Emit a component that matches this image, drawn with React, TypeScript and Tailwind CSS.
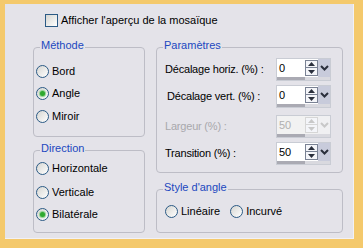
import React from 'react'

const Radio = ({ checked }: { checked?: boolean }) => (
  <span className="w-[13px] h-[13px] shrink-0 rounded-full border border-[#2b5a85] bg-linear-to-br from-[#d6d6d2] to-white flex items-center justify-center">
    {checked && <span className="w-[5px] h-[5px] rounded-full bg-[#2fa92f] shadow-[0_0_1px_1px_#8ad08a]" />}
  </span>
)

const RadioItem = ({ label, checked, className = '' }: { label: string; checked?: boolean; className?: string }) => (
  <div className={`flex items-center h-[13px] gap-[3px] ${className}`}>
    <Radio checked={checked} />
    <span className="leading-[13px]">{label}</span>
  </div>
)

const Group = ({ title, className, children }: { title: string; className: string; children: React.ReactNode }) => (
  <div className={`relative rounded-[4px] border border-[#bdbdc6] ${className}`}>
    <span className="absolute -top-[9px] left-[6px] px-[1px] bg-[#e4e3e9] leading-[13px] text-[#2148c0]">{title}</span>
    {children}
  </div>
)

const SpinField = ({ value, disabled }: { value: string; disabled?: boolean }) => {
  const arrow = disabled ? '#c8c8c8' : '#2a2f3c'
  const btnBorder = disabled ? 'border-[#d6d6d6]' : 'border-[#7a8294]'
  return (
    <div className="w-[55px] h-[23px] flex flex-col border border-[#c9ccd4]">
      <div className={`flex h-[18px] ${disabled ? 'bg-[#f2f2f2]' : 'bg-white'}`}>
        <span className={`flex-1 pl-[2px] leading-[18px] ${disabled ? 'text-[#b0b0b0]' : 'text-black'}`}>{value}</span>
        <div className="w-[13px] flex flex-col pt-[1px]">
          <div className={`h-[8px] border ${btnBorder} bg-[#f4f5f9] flex items-center justify-center`}>
            <svg width="7" height="4" viewBox="0 0 7 4"><path d="M0 4 L3.5 0 L7 4 Z" fill={arrow} /></svg>
          </div>
          <div className={`h-[8px] border border-t-0 ${btnBorder} bg-[#f4f5f9] flex items-center justify-center`}>
            <svg width="7" height="4" viewBox="0 0 7 4"><path d="M0 0 L3.5 4 L7 0 Z" fill={arrow} /></svg>
          </div>
        </div>
        <div className={`w-[12px] flex items-center justify-center ${disabled ? 'bg-[#f0f0f2]' : 'bg-[#c8cbdb]'}`}>
          <svg width="9" height="6" viewBox="0 0 9 6">
            <path d="M1 1 L4.5 4.5 L8 1" stroke={arrow} strokeWidth="2" fill="none" />
          </svg>
        </div>
      </div>
      <div className="flex h-[4px]">
        <div className="w-[28px] bg-[#aaaab3]" />
        <div className="flex-1 bg-[#d9d9df]" />
      </div>
    </div>
  )
}

const ParamRow = ({ label, value, disabled, className = '', labelClass = '' }: { label: string; value: string; disabled?: boolean; className?: string; labelClass?: string }) => (
  <div className={`flex items-center justify-between h-[23px] ${className}`}>
    <span className={`tracking-[-0.2px] ${disabled ? 'text-[#a8a8ac]' : 'text-black'} ${labelClass}`}>{label}</span>
    <SpinField value={value} disabled={disabled} />
  </div>
)

export default function App() {
  return (
    <div className="w-[363px] h-[248px] bg-[#f4c96c] pt-[4px] pl-[5px] font-['Liberation_Sans',Arial,sans-serif] text-[11px] text-black">
      <div className="w-[349px] h-[235px] bg-[#e4e3e9] pt-[10px] border-r border-b border-[#f2f1f5]">
        <div className="flex items-center gap-[3px] pl-[40px] h-[13px]">
          <span className="w-[13px] h-[13px] border border-[#2b5a85] bg-linear-to-br from-[#d6d6d2] to-white" />
          <span className="leading-[13px]">Afficher l'aperçu de la mosaïque</span>
        </div>

        <div className="flex gap-[11px] pl-[28px] mt-[20px]">
          <div className="flex flex-col w-[112px]">
            <Group title="Méthode" className="h-[90px] pl-[2px] pt-[17px]">
              <RadioItem label="Bord" />
              <RadioItem label="Angle" checked className="mt-[9px]" />
              <RadioItem label="Miroir" className="mt-[10px]" />
            </Group>
            <Group title="Direction" className="h-[83px] mt-[13px] pl-[2px] pt-[11px]">
              <RadioItem label="Horizontale" />
              <RadioItem label="Verticale" className="mt-[11px]" />
              <RadioItem label="Bilatérale" checked className="mt-[9px]" />
            </Group>
          </div>

          <div className="flex flex-col w-[187px]">
            <Group title="Paramètres" className="h-[126px] pl-[8px] pr-[11px] pt-[10px]">
              <ParamRow label="Décalage horiz. (%) :" value="0" />
              <ParamRow label="Décalage vert. (%) :" value="0" className="mt-[4px]" labelClass="pl-[2px]" />
              <ParamRow label="Largeur (%) :" value="50" disabled className="mt-[7px]" />
              <ParamRow label="Transition (%) :" value="50" className="mt-[4px]" />
            </Group>
            <Group title="Style d'angle" className="h-[44px] mt-[16px] pl-[8px] pt-[15px]">
              <div className="flex">
                <RadioItem label="Linéaire" />
                <RadioItem label="Incurvé" className="ml-[10px]" />
              </div>
            </Group>
          </div>
        </div>
      </div>
    </div>
  )
}
